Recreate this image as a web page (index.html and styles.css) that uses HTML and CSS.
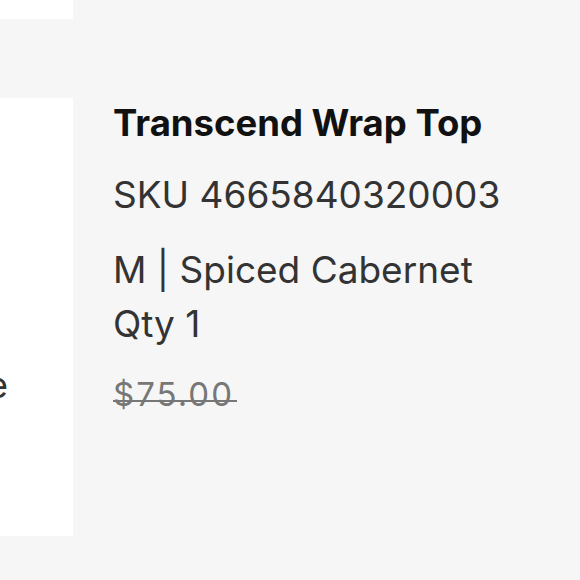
FILE: index.html
```html
<!DOCTYPE html>
<html>
<head>
<meta charset="utf-8">
<link rel="stylesheet" href="styles.css">
</head>
<body>
<div class="page">
  <div class="top-strip"></div>
  <div class="item">
    <div class="thumb"><span class="thumb-text">Image unavailable</span></div>
    <div class="info">
      <div class="title">Transcend Wrap Top</div>
      <div class="sku">SKU 4665840320003</div>
      <div class="variant">M | Spiced Cabernet</div>
      <div class="qty">Qty 1</div>
      <div class="price-row"><span class="price">$75.00</span></div>
    </div>
  </div>
</div>
</body>
</html>
```
FILE: styles.css
```css
html, body {
  margin: 0;
  padding: 0;
  background: #f6f6f6;
}
body {
  font-family: Inter, "Noto Sans", sans-serif;
  color: #333;
}
.page {
  display: flex;
  flex-direction: column;
  width: 580px;
  height: 580px;
  overflow: hidden;
}
.top-strip {
  width: 73px;
  height: 19px;
  background: #fff;
}
.item {
  display: flex;
  margin-top: 79px;
  gap: 40px;
}
.thumb {
  width: 73px;
  height: 438px;
  background: #fff;
  overflow: hidden;
  display: flex;
  justify-content: flex-end;
  align-items: flex-start;
  flex-shrink: 0;
}
.thumb-text {
  white-space: nowrap;
  font-size: 36px;
  line-height: 36px;
  color: #333;
  margin-right: 65px;
  margin-top: 269px;
}
.info {
  display: flex;
  flex-direction: column;
  margin-top: -2px;
}
.title {
  font-size: 36.5px;
  line-height: 54px;
  font-weight: 700;
  color: #111;
}
.sku {
  font-size: 37px;
  line-height: 54px;
  margin-top: 18px;
}
.variant {
  font-size: 37px;
  line-height: 54px;
  margin-top: 21px;
}
.qty {
  font-size: 37px;
  line-height: 54px;
}
.price-row {
  display: flex;
  margin-top: 16px;
}
.price {
  font-size: 33px;
  line-height: 54px;
  letter-spacing: 2px;
  padding-right: 3px;
  color: #777;
  background: linear-gradient(#777, #777) no-repeat;
  background-size: 100% 2px;
  background-position: 0 33px;
}
```
